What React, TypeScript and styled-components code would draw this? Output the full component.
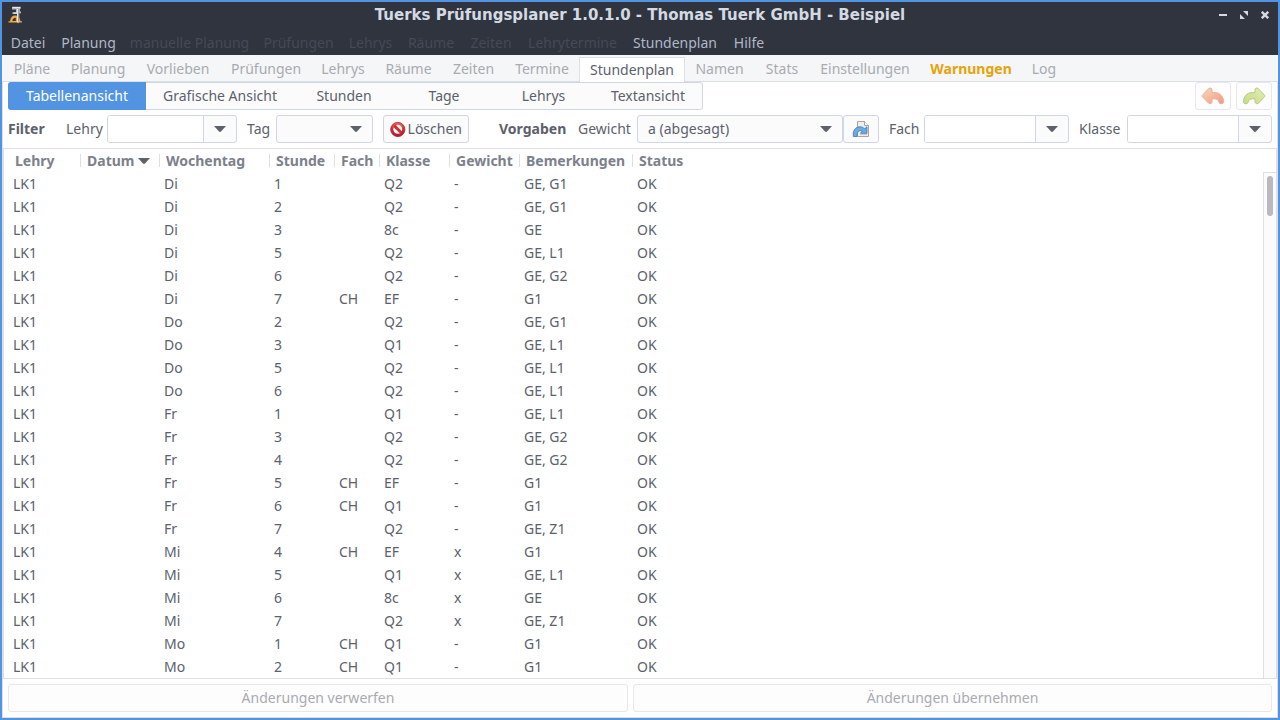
import React from 'react';
import styled, { createGlobalStyle, css } from 'styled-components';

const color = {
  accent: '#5294e2',
  dark: '#2f343f',
  text: '#5c616c',
  muted: '#a8abb1',
  line: '#dcdfe3',
  control: '#cfd6e6',
  face: '#fbfbfc',
  warning: '#e6a30a',
};

const GlobalStyle = createGlobalStyle`
  * { box-sizing: border-box; }
  body {
    margin: 0;
    font: 14px/20px "Noto Sans", "Open Sans", sans-serif;
    color: ${color.text};
  }
  button, input, select { font: inherit; color: inherit; margin: 0; padding: 0; }
`;

const Window = styled.div`
  display: flex;
  flex-direction: column;
  height: 100vh;
  border: 2px solid ${color.accent};
  background: #fff;
  overflow: hidden;
`;

const TitleBar = styled.header`
  display: grid;
  grid-template-columns: 1fr auto 1fr;
  align-items: center;
  height: 28px;
  padding: 0 5px 2px;
  background: ${color.dark};
`;

const Title = styled.h1`
  margin: 0;
  font: bold 15px/20px "DejaVu Sans", sans-serif;
  color: #d3dae3;
  white-space: nowrap;
`;

const WindowControls = styled.div`
  display: flex;
  justify-content: flex-end;
  gap: 5px;
`;

const WindowButton = styled.button`
  display: flex;
  align-items: center;
  justify-content: center;
  width: 16px;
  height: 16px;
  border: 0;
  background: none;
`;

const MenuBar = styled.nav`
  display: flex;
  height: 25px;
  background: ${color.dark};
`;

const MenuItem = styled.button<{ $w: number }>`
  width: ${p => p.$w}px;
  border: 0;
  background: none;
  color: #afb8c6;
  line-height: 24px;
  white-space: nowrap;
  &:disabled { color: #454a55; }
`;

const TabBar = styled.nav`
  display: flex;
  align-items: flex-end;
  height: 27px;
  padding-left: 1px;
  background: #f5f6f7;
  border-bottom: 1px solid ${color.line};
`;

const Tab = styled.button<{ $w: number; $active?: boolean; $warn?: boolean }>`
  width: ${p => p.$w}px;
  height: 25px;
  border: 0;
  background: none;
  color: ${color.muted};
  line-height: 24px;
  white-space: nowrap;
  ${p => p.$active && css`
    color: ${color.text};
    background: #fff;
    border: 1px solid ${color.line};
    border-bottom: 0;
    margin-bottom: -1px;
    padding-bottom: 2px;
  `}
  ${p => p.$warn && css`
    color: ${color.warning};
    font-weight: bold;
  `}
`;

const Page = styled.main`
  display: flex;
  flex-direction: column;
  flex: 1;
  min-height: 0;
  border: 1px solid ${color.line};
  border-top: 0;
`;

const Bar = styled.div`
  display: flex;
  flex-shrink: 0;
  align-items: center;
  justify-content: space-between;
  height: 28px;
  padding: 0 5px;
`;

const FilterBar = styled(Bar)`
  margin: 5px 0;
`;

const Group = styled.div`
  display: flex;
  gap: 5px;
`;

const face = css`
  height: 28px;
  border: 1px solid ${color.control};
  border-radius: 3px;
  background: ${color.face};
`;

const Switcher = styled.div`
  display: flex;
  ${face}
`;

const View = styled.button<{ $w: number; $active?: boolean }>`
  width: ${p => p.$w}px;
  height: 28px;
  margin: -1px 0;
  border: 0;
  background: none;
  line-height: 26px;
  white-space: nowrap;
  &:first-child { margin-left: -1px; }
  &:last-child { margin-right: -1px; }
  ${p => p.$active && css`
    color: #fff;
    background: ${color.accent};
    border-radius: 3px 0 0 3px;
  `}
`;

const Button = styled.button`
  display: flex;
  align-items: center;
  justify-content: center;
  gap: 2px;
  ${face}
  padding: 0 6px;
  white-space: nowrap;
  &:disabled {
    color: ${color.muted};
    border-color: #e5e8f1;
    background: #fdfdfd;
  }
`;

const IconButton = styled(Button)`
  width: 36px;
  padding: 0;
  flex-shrink: 0;
  &:disabled svg { opacity: 0.65; }
`;

const ClearButton = styled(Button)`
  width: 86px;
  margin: 0 30px 0 10px;
  flex-shrink: 0;
`;

const Section = styled.span<{ $w: number }>`
  flex: 0 0 ${p => p.$w}px;
  font-weight: bold;
  white-space: nowrap;
`;

const Label = styled.label<{ $w: number; $gap?: boolean }>`
  flex: 0 0 ${p => p.$w}px;
  margin-left: ${p => (p.$gap ? 10 : 0)}px;
  white-space: nowrap;
`;

const Combo = styled.div<{ $w?: number }>`
  display: flex;
  flex: ${p => (p.$w ? `0 0 ${p.$w}px` : '1 1 0')};
  min-width: 0;
  ${face}
  overflow: hidden;
`;

const ComboInput = styled.input`
  flex: 1;
  min-width: 0;
  padding: 0 8px;
  border: 0;
  background: #fff;
`;

const ComboButton = styled.button`
  display: flex;
  align-items: center;
  justify-content: center;
  width: 33px;
  border: 0;
  border-left: 1px solid ${color.control};
  background: none;
`;

const SelectBox = styled.div<{ $w: number }>`
  position: relative;
  flex: 0 0 ${p => p.$w}px;
  svg {
    position: absolute;
    right: 11px;
    top: 11px;
    pointer-events: none;
  }
`;

const Select = styled.select`
  display: block;
  width: 100%;
  appearance: none;
  ${face}
  padding: 0 30px 0 10px;
`;

const TableFrame = styled.div`
  display: flex;
  flex: 1;
  min-height: 0;
  border: 1px solid ${color.line};
`;

const TableArea = styled.div`
  flex: 1;
  overflow: hidden;
`;

const Table = styled.table`
  width: 100%;
  table-layout: fixed;
  border-collapse: collapse;
`;

const Th = styled.th`
  height: 23px;
  padding: 0 0 0 6px;
  text-align: left;
  color: #7c818b;
  white-space: nowrap;
  background: linear-gradient(${color.line}, ${color.line}) right 5px / 1px 13px no-repeat;
  &:first-child { padding-left: 11px; }
  &:last-child { background: none; }
  svg { margin-left: 4px; vertical-align: 2px; }
`;

const Td = styled.td`
  height: 23px;
  padding: 0 0 0 4px;
  white-space: nowrap;
  &:first-child { padding-left: 9px; }
`;

const ScrollTrack = styled.div`
  width: 13px;
  margin-top: 23px;
  padding: 3px;
  border: 1px solid ${color.line};
  border-width: 1px 0 0 1px;
  background: ${color.face};
`;

const ScrollThumb = styled.div`
  width: 6px;
  height: 40px;
  border-radius: 3px;
  background: #b8babf;
`;

const ActionBar = styled(Bar)`
  gap: 5px;
  margin: 5px 0;
  button { flex: 1 1 auto; }
`;

const Arrow = () => (
  <svg width="12" height="6" viewBox="0 0 12 6" aria-hidden="true">
    <path d="M0 0H12L7 5.5Q6 6.4 5 5.5Z" fill={color.text} />
  </svg>
);

const AppIcon = () => (
  <svg width="16" height="18" viewBox="0 0 16 18" aria-hidden="true">
    <path d="M1.5 16.5H15V15.3H13.5Q12.5 9.4 8 9.4Q3.8 9.4 3 15.3H1.5Z" fill="#f5a83c" />
    <path d="M5.4 15Q5.5 12.2 8.8 11.8V15Z" fill={color.dark} />
    <path d="M5 .8H13.8V2.8H13V5.5H14V7.2H12.2V16L11 17.5L10 16V8H5.5V6.2H9V3.4H5Z" fill="#b9bdc0" />
    <path d="M5.6 1.5H13M10.6 3V16M6.5 7H10" stroke="#eef0f0" strokeWidth="0.9" />
    <path d="M11.8 3V15" stroke="#747a80" strokeWidth="0.7" />
  </svg>
);

const ForbidIcon = () => (
  <svg width="17" height="17" viewBox="0 0 17 17" aria-hidden="true">
    <defs>
      <linearGradient id="forbid" x2="0" y2="1">
        <stop stopColor="#ee6a5e" />
        <stop offset="0.5" stopColor="#c92c30" />
        <stop offset="1" stopColor="#a81c38" />
      </linearGradient>
    </defs>
    <circle cx="8.5" cy="8.5" r="7.8" fill="url(#forbid)" stroke="#a8202c" strokeWidth="0.8" />
    <circle cx="8.5" cy="8.2" r="4.9" fill="#f4f2f1" />
    <path d="M4.6 4.3L12.4 12.1" stroke="#cc3035" strokeWidth="3.2" />
  </svg>
);

const RevertIcon = () => (
  <svg width="18" height="18" viewBox="0 0 18 18" aria-hidden="true">
    <path d="M5.5 1.5H12.5L16.5 5.5V16.5H5.5Z" fill="#efefed" stroke="#a5a6a3" />
    <path d="M12.5 1.5V5.5H16.5" fill="#fff" stroke="#a5a6a3" />
    <path d="M8 14.6H15" stroke="#c4c5c2" />
    <path d="M1.3 16.5V13C1.8 8.8 5 6.8 8 6.8C10 6.8 11.5 7.5 12.5 8.8L15 6.7V13.3H8.5L10.2 11.1C7.6 9.9 5 11 5 16.5Z" fill="#6faae0" stroke="#3878b8" strokeWidth="0.8" strokeLinejoin="round" />
  </svg>
);

const TurnIcon = ({ redo = false }: { redo?: boolean }) => (
  <svg width="24" height="18" viewBox="0 0 24 18" aria-hidden="true">
    <defs>
      <linearGradient id={redo ? 'redo' : 'undo'} x2="1" y2="1">
        <stop stopColor={redo ? '#d6e68a' : '#f8c890'} />
        <stop offset="1" stopColor={redo ? '#a5cc3c' : '#ec6048'} />
      </linearGradient>
    </defs>
    <path
      transform={redo ? 'matrix(-1 0 0 1 24 0)' : undefined}
      d="M1.2 9.4L1.2 8.6L7.8 1.4Q10.2.4 11 2.2V5.6H14.6C18.6 5.8 22.4 9.6 22.7 14.4Q22.4 17 20 16.8Q18.4 16.8 17.9 15.2C17.2 12.6 15.6 11.8 13.6 11.8H11V15.4Q10 17.4 8 16.6Z"
      fill={redo ? 'url(#redo)' : 'url(#undo)'}
      stroke={redo ? '#8fae54' : '#d68a68'}
      strokeLinejoin="round"
    />
  </svg>
);

const menu: [string, number, boolean?][] = [
  ['Datei', 52], ['Planung', 69], ['manuelle Planung', 133, true], ['Prüfungen', 85, true],
  ['Lehrys', 59, true], ['Räume', 62, true], ['Zeiten', 58, true], ['Lehrytermine', 105, true],
  ['Stundenplan', 100], ['Hilfe', 48],
];

const tabs: [string, number][] = [
  ['Pläne', 58], ['Planung', 74], ['Vorlieben', 86], ['Prüfungen', 90], ['Lehrys', 64],
  ['Räume', 67], ['Zeiten', 63], ['Termine', 74], ['Stundenplan', 106], ['Namen', 69],
  ['Stats', 56], ['Einstellungen', 110], ['Warnungen', 102], ['Log', 44],
];

const views: [string, number][] = [
  ['Tabellenansicht', 138], ['Grafische Ansicht', 148], ['Stunden', 100],
  ['Tage', 100], ['Lehrys', 99], ['Textansicht', 110],
];

const columns: [string, number?][] = [
  ['Lehry', 77], ['Datum', 79], ['Wochentag', 110], ['Stunde', 65], ['Fach', 45],
  ['Klasse', 70], ['Gewicht', 70], ['Bemerkungen', 113], ['Status'],
];

/* Wochentag, Stunde, Fach, Klasse, Gewicht, Bemerkungen */
const lessons = [
  ['Di', '1', '', 'Q2', '-', 'GE, G1'],
  ['Di', '2', '', 'Q2', '-', 'GE, G1'],
  ['Di', '3', '', '8c', '-', 'GE'],
  ['Di', '5', '', 'Q2', '-', 'GE, L1'],
  ['Di', '6', '', 'Q2', '-', 'GE, G2'],
  ['Di', '7', 'CH', 'EF', '-', 'G1'],
  ['Do', '2', '', 'Q2', '-', 'GE, G1'],
  ['Do', '3', '', 'Q1', '-', 'GE, L1'],
  ['Do', '5', '', 'Q2', '-', 'GE, L1'],
  ['Do', '6', '', 'Q2', '-', 'GE, L1'],
  ['Fr', '1', '', 'Q1', '-', 'GE, L1'],
  ['Fr', '3', '', 'Q2', '-', 'GE, G2'],
  ['Fr', '4', '', 'Q2', '-', 'GE, G2'],
  ['Fr', '5', 'CH', 'EF', '-', 'G1'],
  ['Fr', '6', 'CH', 'Q1', '-', 'G1'],
  ['Fr', '7', '', 'Q2', '-', 'GE, Z1'],
  ['Mi', '4', 'CH', 'EF', 'x', 'G1'],
  ['Mi', '5', '', 'Q1', 'x', 'GE, L1'],
  ['Mi', '6', '', '8c', 'x', 'GE'],
  ['Mi', '7', '', 'Q2', 'x', 'GE, Z1'],
  ['Mo', '1', 'CH', 'Q1', '-', 'G1'],
  ['Mo', '2', 'CH', 'Q1', '-', 'G1'],
];

const ComboBox = ({ id, width }: { id: string; width?: number }) => (
  <Combo $w={width}>
    <ComboInput id={id} />
    <ComboButton aria-label="Auswahl öffnen"><Arrow /></ComboButton>
  </Combo>
);

export default function App() {
  return (
    <>
      <GlobalStyle />
      <Window>
        <TitleBar>
          <AppIcon />
          <Title>Tuerks Prüfungsplaner 1.0.1.0 - Thomas Tuerk GmbH - Beispiel</Title>
          <WindowControls>
            <WindowButton aria-label="Minimieren">
              <svg width="8" height="8"><path d="M0 3H8V5H0Z" fill="#d3dae3" /></svg>
            </WindowButton>
            <WindowButton aria-label="Maximieren">
              <svg width="8" height="8"><path d="M3 0H8V5ZM0 3L5 8H0Z" fill="#d3dae3" /></svg>
            </WindowButton>
            <WindowButton aria-label="Schließen">
              <svg width="8" height="8"><path d="M.8 .8L7.2 7.2M7.2 .8L.8 7.2" stroke="#d3dae3" strokeWidth="2.4" /></svg>
            </WindowButton>
          </WindowControls>
        </TitleBar>
        <MenuBar>
          {menu.map(([name, w, off]) => <MenuItem key={name} $w={w} disabled={off}>{name}</MenuItem>)}
        </MenuBar>
        <TabBar>
          {tabs.map(([name, w]) => (
            <Tab key={name} $w={w} $active={name === 'Stundenplan'} $warn={name === 'Warnungen'}>{name}</Tab>
          ))}
        </TabBar>
        <Page>
          <Bar>
            <Switcher>
              {views.map(([name, w], i) => <View key={name} $w={w} $active={i === 0}>{name}</View>)}
            </Switcher>
            <Group>
              <IconButton disabled aria-label="Rückgängig"><TurnIcon /></IconButton>
              <IconButton disabled aria-label="Wiederholen"><TurnIcon redo /></IconButton>
            </Group>
          </Bar>
          <FilterBar>
            <Section $w={58}>Filter</Section>
            <Label $w={41} htmlFor="lehry">Lehry</Label>
            <ComboBox id="lehry" width={130} />
            <Label $w={29} $gap htmlFor="tag">Tag</Label>
            <SelectBox $w={97}>
              <Select id="tag"><option /></Select>
              <Arrow />
            </SelectBox>
            <ClearButton><ForbidIcon />Löschen</ClearButton>
            <Section $w={79}>Vorgaben</Section>
            <Label $w={59} htmlFor="gewicht">Gewicht</Label>
            <SelectBox $w={206}>
              <Select id="gewicht"><option>a (abgesagt)</option></Select>
              <Arrow />
            </SelectBox>
            <IconButton aria-label="Vorgaben laden"><RevertIcon /></IconButton>
            <Label $w={35} $gap htmlFor="fach">Fach</Label>
            <ComboBox id="fach" />
            <Label $w={48} $gap htmlFor="klasse">Klasse</Label>
            <ComboBox id="klasse" />
          </FilterBar>
          <TableFrame>
            <TableArea>
              <Table>
                <colgroup>
                  {columns.map(([name, w]) => <col key={name} width={w} />)}
                </colgroup>
                <thead>
                  <tr>
                    {columns.map(([name]) => <Th key={name}>{name}{name === 'Datum' && <Arrow />}</Th>)}
                  </tr>
                </thead>
                <tbody>
                  {lessons.map((lesson, i) => (
                    <tr key={i}>
                      {['LK1', '', ...lesson, 'OK'].map((value, j) => <Td key={j}>{value}</Td>)}
                    </tr>
                  ))}
                </tbody>
              </Table>
            </TableArea>
            <ScrollTrack><ScrollThumb /></ScrollTrack>
          </TableFrame>
          <ActionBar>
            <Button disabled>Änderungen verwerfen</Button>
            <Button disabled>Änderungen übernehmen</Button>
          </ActionBar>
        </Page>
      </Window>
    </>
  );
}
